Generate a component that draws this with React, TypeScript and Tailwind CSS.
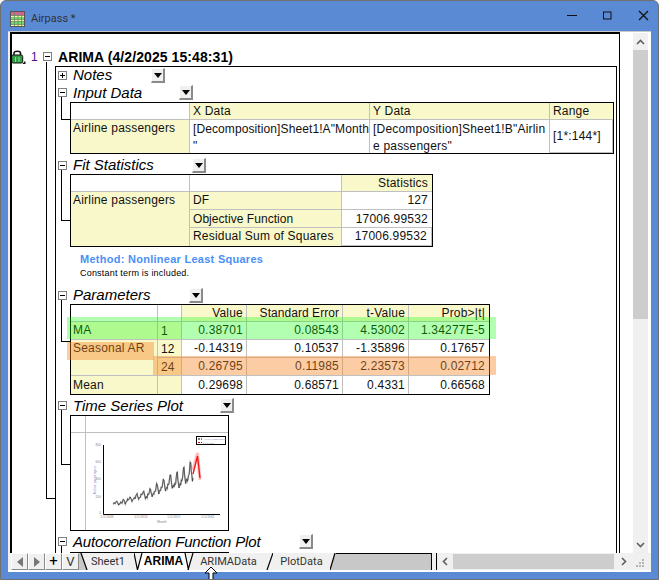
import { ReactNode } from 'react';

const PASSENGERS = [
  112, 118, 132, 129, 121, 135, 148, 148, 136, 119, 104, 118, 115, 126, 141, 135, 125, 149, 170, 170, 158, 133, 114, 140,
  145, 150, 178, 163, 172, 178, 199, 199, 184, 162, 146, 166, 171, 180, 193, 181, 183, 218, 230, 242, 209, 191, 172, 194,
  196, 196, 236, 235, 229, 243, 264, 272, 237, 211, 180, 201, 204, 188, 235, 227, 234, 264, 302, 293, 259, 229, 203, 229,
  242, 233, 267, 269, 270, 315, 364, 347, 312, 274, 237, 278, 284, 277, 317, 313, 318, 374, 413, 405, 355, 306, 271, 306,
  315, 301, 356, 348, 355, 422, 465, 467, 404, 347, 305, 336, 340, 318, 362, 348, 363, 435, 491, 505, 404, 359, 310, 337,
  360, 342, 406, 396, 420, 472, 548, 559, 463, 407, 362, 405, 417, 391, 419, 461, 472, 535, 622, 606, 508, 461, 390, 432,
];

// page coordinates, the chart's viewBox starts at the cell's corner
const seriesPoints = PASSENGERS.map((v, i) => {
  const x = 113 + (i * 80) / 143;
  const y = 505 - ((v - 104) * 43) / 518;
  return `${x.toFixed(1)},${y.toFixed(1)}`;
}).join(' ');

const cell = 'border-r border-b border-[#c0c0c0] px-[3px] leading-[17px] whitespace-nowrap overflow-hidden';
const yellow = 'bg-[#f9f8cb]';
const right = 'text-right';

function Lock() {
  return (
    <svg width="15" height="14" viewBox="0 0 15 14" className="shrink-0">
      <path d="M3 6V3C3 0.6 9.5 0.6 9.5 3V6" fill="none" stroke="#111" strokeWidth="1.6" />
      <rect x="0.7" y="5" width="11" height="8" rx="1.5" fill="#2f9e44" stroke="#111" />
      <path d="M4.5 7v5M8 7v5" stroke="#7fdc8f" />
      <path d="M13.8 11.5v2H11.8" fill="none" stroke="#111" strokeWidth="1.4" />
    </svg>
  );
}

function SheetIcon() {
  return (
    <svg width="15" height="16" viewBox="0 0 15 16" className="shrink-0">
      <rect x="0.5" y="0.5" width="14" height="15" fill="#f4f5a0" stroke="#555" />
      <rect x="1" y="1" width="13" height="3.5" fill="#e45f9a" />
      <rect x="1" y="6" width="13" height="2" fill="#74d66f" />
      <rect x="1" y="11" width="13" height="2" fill="#74d66f" />
      <path d="M4.5 1v14M8 1v14M11.5 1v14M1 4.5h13M1 8.5h13M1 10.5h13M1 13.5h13" stroke="#5f8a5f" strokeWidth="0.8" />
    </svg>
  );
}

function TreeBox({ open = true }: { open?: boolean }) {
  return (
    <div className="w-[9px] h-[9px] shrink-0 border border-[#808080] bg-white flex items-center justify-center relative z-10">
      <div className="w-[5px] h-px bg-black" />
      {!open && <div className="absolute w-px h-[5px] bg-black" />}
    </div>
  );
}

function DropButton() {
  return (
    <div className="w-[14px] h-[15px] shrink-0 bg-[#f0f0f0] border-t border-l border-t-white border-l-white border-r-2 border-b-2 border-r-[#8a8a8a] border-b-[#8a8a8a] flex items-center justify-center">
      <div className="w-0 h-0 border-x-[4px] border-x-transparent border-t-[5px] border-t-black" />
    </div>
  );
}

function Head({ label, width, open = true, low = false }: { label: string; width: string; open?: boolean; low?: boolean }) {
  return (
    <div className="flex items-center pl-[2px] h-[17px]">
      <TreeBox open={open} />
      <div className={`ml-[6px] ${low ? '' : 'mb-[2px]'} shrink-0 text-[15px] italic leading-[17px] text-black whitespace-nowrap ${width}`}>{label}</div>
      <DropButton />
    </div>
  );
}

function Elbow({ className }: { className: string }) {
  return <div className={`absolute left-[5px] w-[9px] border-l border-b border-black ${className}`} />;
}

function Table({ className, children }: { className: string; children: ReactNode }) {
  return <div className={`relative ml-[14px] grid border border-black bg-white text-[12px] tracking-[0.2px] text-[#111] ${className}`}>{children}</div>;
}

function InputData() {
  return (
    <div className="relative">
      <Head label="Input Data" width="w-[106px]" low />
      <Elbow className="top-[13px] h-[23px]" />
      <Table className="mt-px w-[544px] h-[52px] grid-cols-[119px_180px_180px_1fr] grid-rows-[17px_1fr]">
        <div className={cell} />
        <div className={`${cell} ${yellow}`}>X Data</div>
        <div className={`${cell} ${yellow}`}>Y Data</div>
        <div className={`${cell} ${yellow} border-r-0`}>Range</div>
        <div className={`${cell} ${yellow} border-b-0 pl-[2px]`}>Airline passengers</div>
        <div className={`${cell} border-b-0 leading-[15px] pt-px tracking-[0.1px]`}>
          [Decomposition]Sheet1!A"Month
          <br />"
        </div>
        <div className={`${cell} border-b-0 leading-[15px] pt-px`}>
          [Decomposition]Sheet1!B"Airlin
          <br />e passengers"
        </div>
        <div className={`${cell} border-0 flex items-center`}>[1*:144*]</div>
      </Table>
    </div>
  );
}

function FitStatistics() {
  return (
    <div className="relative mt-[3px]">
      <Head label="Fit Statistics" width="w-[119px]" />
      <Elbow className="top-[12px] h-[52px]" />
      <Table className="w-[363px] h-[73px] grid-cols-[119px_152px_1fr] grid-rows-[17px_18px_18px_1fr]">
        <div className={cell} />
        <div className={cell} />
        <div className={`${cell} ${yellow} border-r-0 ${right} pr-[4px]`}>Statistics</div>
        <div className={`${cell} ${yellow} row-span-3 border-b-0 pl-[2px]`}>Airline passengers</div>
        <div className={`${cell} ${yellow}`}>DF</div>
        <div className={`${cell} border-r-0 ${right} pr-[4px]`}>127</div>
        <div className={`${cell} ${yellow} pt-px tracking-[0.05px]`}>Objective Function</div>
        <div className={`${cell} border-r-0 ${right} pt-px pr-[4px]`}>17006.99532</div>
        <div className={`${cell} ${yellow} border-b-0`}>Residual Sum of Squares</div>
        <div className={`${cell} border-0 ${right} pr-[4px]`}>17006.99532</div>
      </Table>
      <div className="h-[40px] pl-[24px] pt-[5px]">
        <div className="text-[11px] font-bold leading-[14px] tracking-[0.27px] text-[#4a90f5]">Method: Nonlinear Least Squares</div>
        <div className="mt-px text-[9px] leading-[12px] tracking-[0.2px] text-black">Constant term is included.</div>
      </div>
    </div>
  );
}

const PARAM_ROWS = [
  ['0.38701', '0.08543', '4.53002', '1.34277E-5'],
  ['-0.14319', '0.10537', '-1.35896', '0.17657'],
  ['0.26795', '0.11985', '2.23573', '0.02712'],
  ['0.29698', '0.68571', '0.4331', '0.66568'],
];

function ParamValues({ row, last = false }: { row: number; last?: boolean }) {
  return (
    <>
      {PARAM_ROWS[row].map((v, i) => (
        <div key={i} className={`${cell} ${right} ${last ? 'border-b-0 pt-px' : ''} ${i === 3 ? 'border-r-0 pr-[4px]' : ''}`}>
          {v}
        </div>
      ))}
    </>
  );
}

function Parameters() {
  return (
    <div className="relative">
      <Head label="Parameters" width="w-[116px]" />
      <Elbow className="top-[12px] h-[43px]" />
      <Table className="w-[420px] h-[91px] grid-cols-[87px_24px_65px_96px_66px_1fr] grid-rows-[17px_18px_18px_18px_1fr]">
        <div className={cell} />
        <div className={cell} />
        <div className={`${cell} ${yellow} ${right}`}>Value</div>
        <div className={`${cell} ${yellow} ${right} tracking-[0.05px]`}>Standard Error</div>
        <div className={`${cell} ${yellow} ${right}`}>t-Value</div>
        <div className={`${cell} ${yellow} border-r-0 ${right} pr-[4px]`}>Prob&gt;|t|</div>

        <div className={`${cell} ${yellow} pl-[2px]`}>MA</div>
        <div className={`${cell} ${yellow} pt-px`}>1</div>
        <ParamValues row={0} />

        <div className={`${cell} ${yellow} row-span-2 pl-[2px]`}>Seasonal AR</div>
        <div className={`${cell} ${yellow} pt-px`}>12</div>
        <ParamValues row={1} />
        <div className={`${cell} ${yellow} pt-px`}>24</div>
        <ParamValues row={2} />

        <div className={`${cell} ${yellow} border-b-0 pt-px pl-[2px]`}>Mean</div>
        <div className={`${cell} ${yellow} border-b-0`} />
        <ParamValues row={3} last />

        {/* highlights lie across the table and stick out of it */}
        <div className="absolute left-[-4px] top-[12px] w-[429px] h-[22px] bg-[#00ff00]/30" />
        <div className="absolute left-[-4px] top-[37px] w-[87px] h-[18px] bg-[#f8821e]/40" />
        <div className="absolute left-[82px] top-[51px] w-[343px] h-[19px] bg-[#f8821e]/40" />
      </Table>
    </div>
  );
}

function Chart() {
  const yTicks: [number, string][] = [
    [445, '800'],
    [462, '600'],
    [479, '400'],
    [497, '200'],
    [513, '0'],
  ];
  const xTicks: [number, string][] = [
    [107, '1/1/1949'],
    [141, '1/1/1953'],
    [174, '1/1/1957'],
    [208, '1/1/1961'],
  ];
  return (
    <svg viewBox="86 433 142 97" className="w-[142px] h-[97px]">
      <g fontFamily="Liberation Sans" fontSize="3" fill="#777">
        {yTicks.map(([y, t]) => (
          <text key={y} x="101" y={y + 1} textAnchor="end">
            {t}
          </text>
        ))}
        {xTicks.map(([x, t]) => (
          <text key={x} x={x} y="518" textAnchor="middle">
            {t}
          </text>
        ))}
        <text x="162" y="523" textAnchor="middle">
          Month
        </text>
        <text x="96" y="480" textAnchor="middle" fill="#8b7fc0" transform="rotate(-90 96 480)">
          Airline passengers
        </text>
      </g>
      <path d="M103.5 445V514.5H220" fill="none" stroke="#000" />
      <polyline points={seriesPoints} fill="none" stroke="#b0b0b0" strokeWidth="1.4" />
      <polyline points={seriesPoints} fill="none" stroke="#222" strokeWidth="0.6" />
      <path d="M193 470L197.5 453L200 480" fill="none" stroke="#ffc0c0" strokeWidth="3" />
      <path d="M193 474L197.5 456L200 478" fill="none" stroke="#f01c1c" strokeWidth="1.4" />
      <rect x="196.5" y="436.5" width="29" height="8" fill="#fff" stroke="#000" />
      <path d="M198 439h4" stroke="#000" strokeDasharray="2 1" />
      <path d="M198 442.5h4" stroke="#e00" strokeDasharray="2 1" />
      <text x="203" y="440" fontFamily="Liberation Sans" fontSize="2.4" fill="#7a7aa0">
        Airline passengers
      </text>
      <text x="203" y="443.5" fontFamily="Liberation Sans" fontSize="2.4" fill="#a07a7a">
        Forecast
      </text>
    </svg>
  );
}

function GraphTable() {
  return (
    <Table className="w-[159px] h-[116px] grid-cols-[15px_1fr] grid-rows-[17px_1fr]">
      <div className="border-r border-b border-[#c0c0c0]" />
      <div className="border-b border-[#c0c0c0]" />
      <div className="border-r border-[#c0c0c0]" />
      <Chart />
    </Table>
  );
}

function TimeSeriesPlot() {
  return (
    <div className="relative mt-[2px]">
      <Head label="Time Series Plot" width="w-[147px]" low />
      <Elbow className="top-[13px] h-[55px]" />
      <div className="mt-px">
        <GraphTable />
      </div>
    </div>
  );
}

function ReportTree() {
  return (
    <div className="relative flex-1 min-w-0 overflow-hidden border-l-2 border-t-2 border-r border-black bg-white font-['Liberation_Sans',Arial,sans-serif]">
      <div className="flex items-center h-[32px] pt-[13px]">
        <div className="ml-[-1px]">
          <Lock />
        </div>
        <div className="ml-[5px] w-[12px] text-[12px] leading-none text-[#4b0f8f]">1</div>
        <TreeBox />
        <div className="ml-[6px] text-[14px] font-bold leading-none tracking-[0.08px] text-black whitespace-nowrap">ARIMA (4/2/2025 15:48:31)</div>
      </div>
      {/* trunk of the tree */}
      <div className="absolute left-[34px] top-[28px] w-[9px] h-[437px] border-l border-b border-black" />
      <div className="ml-[43px] mr-[2px] border-t border-l border-r border-black h-[560px]">
        <Head label="Notes" width="w-[78px]" open={false} />
        <InputData />
        <FitStatistics />
        <Parameters />
        <TimeSeriesPlot />
        <div className="relative mt-[2px]">
          <Head label="Autocorrelation Function Plot" width="w-[226px] tracking-[-0.18px]" low />
          <div className="absolute left-[5px] top-[13px] h-[10px] border-l border-black" />
          <div className="ml-[14px] mt-[2px] w-[159px] h-[60px] border border-black" />
        </div>
      </div>
    </div>
  );
}

function VScroll() {
  return (
    <div className="w-[15px] shrink-0 mt-px bg-[#f0f0f0] flex flex-col">
      <div className="h-[17px] flex items-center justify-center">
        <svg width="9" height="6" viewBox="0 0 9 6">
          <path d="M1 5l3.5-3.5L8 5" fill="none" stroke="#606060" strokeWidth="1.6" />
        </svg>
      </div>
      <div className="h-[269px] bg-[#cdcdcd]" />
      <div className="flex-1" />
      <div className="h-[17px] flex items-center justify-center">
        <svg width="9" height="6" viewBox="0 0 9 6">
          <path d="M1 1l3.5 3.5L8 1" fill="none" stroke="#606060" strokeWidth="1.6" />
        </svg>
      </div>
    </div>
  );
}

function NavButton({ children }: { children: ReactNode }) {
  return (
    <div className="w-[17px] h-[17px] shrink-0 bg-[#f0f0f0] border-r border-b border-[#8a8a8a] border-t border-l border-t-white border-l-white flex items-center justify-center text-[13px] leading-none text-[#333]">
      {children}
    </div>
  );
}

function Slant({ width, d, grey, white }: { width: string; d: string; grey?: string; white?: string }) {
  return (
    <svg viewBox="0 0 14 17" preserveAspectRatio="xMinYMin slice" className={`h-[17px] shrink-0 ${width}`}>
      {grey && <path d={grey} fill="#c8c8c8" />}
      {white && <path d={white} fill="#fff" />}
      <path d={d} fill="none" stroke="#000" strokeWidth="1.2" />
    </svg>
  );
}

function TabBar() {
  return (
    <div className="h-[17px] flex bg-[#f0f0f0] font-['Roboto',sans-serif] text-[11px] text-[#333]">
      <div className="ml-[3px] flex">
        <NavButton>
          <div className="w-0 h-0 border-y-[5px] border-y-transparent border-r-[6px] border-r-[#777]" />
        </NavButton>
        <NavButton>
          <div className="w-0 h-0 border-y-[5px] border-y-transparent border-l-[6px] border-l-[#777]" />
        </NavButton>
        <NavButton>
          <span className="text-black text-[15px]">+</span>
        </NavButton>
        <NavButton>V</NavButton>
      </div>
      <Slant width="w-[9px]" d="M2 0L8 17" grey="M0 0H2L8 17H0Z" />
      <div className="w-[46px] pr-[6px] text-center leading-[17px]">Sheet1</div>
      <Slant width="w-[9px]" d="M0 0L3.5 17M3.5 17L8 0" white="M8 0H9V17H3.5Z" />
      <div className="w-[41px] bg-white font-['Liberation_Sans',sans-serif] text-[12px] font-bold text-black text-center leading-[17px]">ARIMA</div>
      <Slant width="w-[13px]" d="M1 0L4.5 17M4 17L9 0" white="M0 0H1L4.5 17H0Z" />
      <div className="w-[63px] text-center leading-[17px]">ARIMAData</div>
      <Slant width="w-[13px]" d="M7 17L13 0" />
      <div className="w-[57px] text-center leading-[17px]">PlotData</div>
      <Slant width="w-[6px]" d="M0 17L5 0" grey="M5 0H14V17H0Z" />
      <div className="w-[96px] bg-[#c8c8c8] border-t border-r border-black" />
      <div className="w-[4px]" />
      <div className="w-px bg-black" />
      <div className="w-[196px] flex items-center">
        <div className="w-[16px] flex justify-center">
          <svg width="6" height="9" viewBox="0 0 6 9">
            <path d="M5 1L1.5 4.5L5 8" fill="none" stroke="#606060" strokeWidth="1.6" />
          </svg>
        </div>
        <div className="w-[161px] h-[15px] bg-[#cdcdcd]" />
        <div className="w-[19px] flex justify-center">
          <svg width="6" height="9" viewBox="0 0 6 9">
            <path d="M1 1l3.5 3.5L1 8" fill="none" stroke="#606060" strokeWidth="1.6" />
          </svg>
        </div>
      </div>
      <div className="w-[15px] flex items-end justify-center pb-[2px]">
        <svg width="9" height="9" viewBox="0 0 9 9">
          <path d="M6 0h2v2H6zM3 3h2v2H3zM6 3h2v2H6zM0 6h2v2H0zM3 6h2v2H3zM6 6h2v2H6z" fill="#b5b5b5" />
        </svg>
      </div>
    </div>
  );
}

export default function App() {
  return (
    <div className="relative w-[659px] h-[580px] overflow-hidden rounded-t-[6px] border border-[#707070] bg-[#5a8ad4] flex flex-col">
      <div className="h-[30px] shrink-0 flex items-center pl-[9px] pt-[6px] font-['Roboto',sans-serif] text-[11px] text-[#333]">
        <SheetIcon />
        <span className="ml-[6px]">Airpass *</span>
        <div className="ml-auto mb-[8px] flex items-center">
          <svg width="10" height="11" viewBox="0 0 10 11">
            <path d="M0 5.5h10" stroke="#111" />
          </svg>
          <svg width="9" height="9" viewBox="0 0 9 9" className="ml-[26px]">
            <rect x="0.5" y="1" width="7.5" height="7" fill="none" stroke="#111" />
          </svg>
          <svg width="11" height="11" viewBox="0 0 11 11" className="ml-[26px] mr-[9px]">
            <path d="M1 1l9 9M10 1l-9 9" stroke="#111" strokeWidth="1.3" />
          </svg>
        </div>
      </div>

      <div className="mx-[7px] mb-[7px] flex-1 min-h-0 flex flex-col bg-[#f0f0f0] border-t border-[#c8c8c8] pl-[2px]">
        <div className="flex-1 min-h-0 flex bg-white">
          <ReportTree />
          <div className="w-[13px] shrink-0 bg-white" />
          <VScroll />
          <div className="w-[3px] shrink-0 bg-white" />
        </div>
        <div className="ml-[-2px]">
          <TabBar />
        </div>
        <div className="h-[2px] ml-[-2px] bg-white" />
      </div>

      {/* mouse pointer over the window edge */}
      <svg width="14" height="14" viewBox="0 0 14 14" className="absolute left-[203px] top-[565px]">
        <path d="M7 1L13 7H9V14H5V7H1Z" fill="#fff" stroke="#000" />
      </svg>
    </div>
  );
}
